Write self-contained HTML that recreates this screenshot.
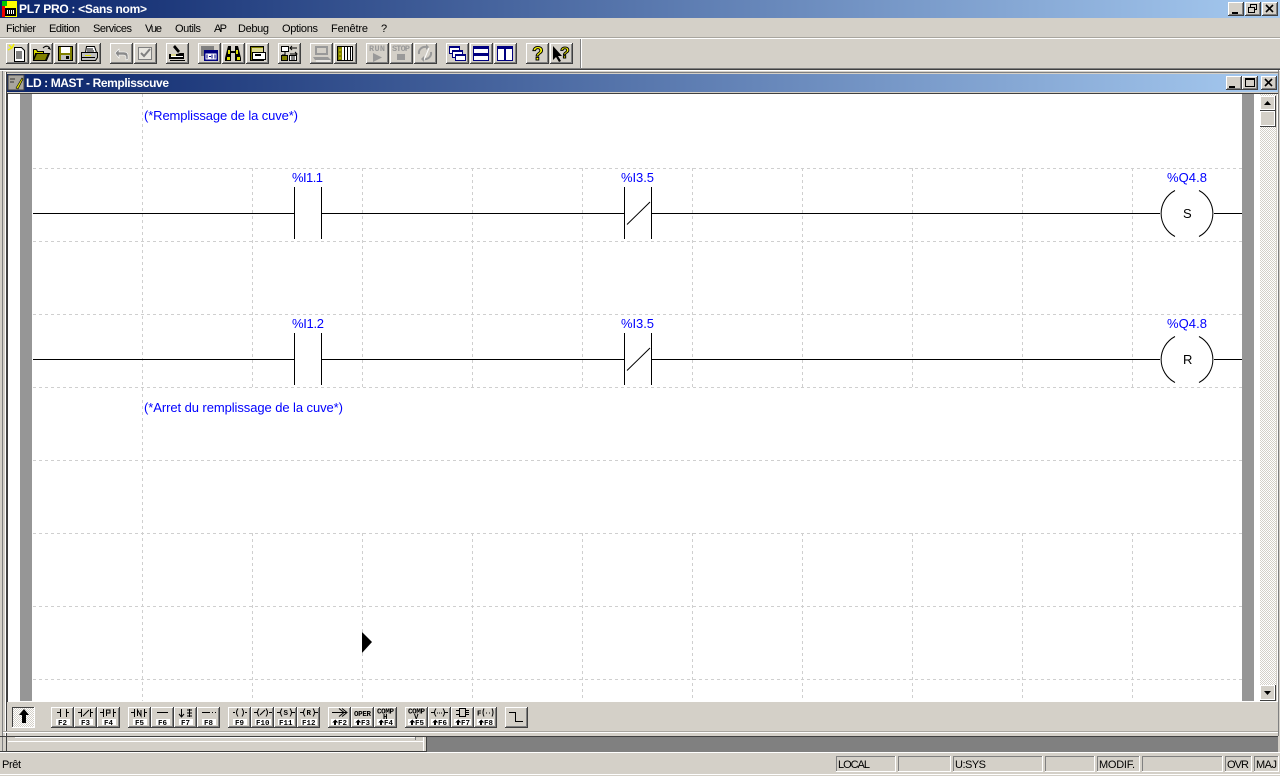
<!DOCTYPE html>
<html><head><meta charset="utf-8"><title>PL7 PRO</title>
<style>html,body{margin:0;padding:0;background:#d4d0c8;overflow:hidden}svg{display:block}
text{font-family:"Liberation Sans",sans-serif}
.m{font-size:11px;fill:#000}.t{font-size:12px;font-weight:bold;fill:#fff}.l{font-size:13px;fill:#00f}
.k{font-family:"Liberation Mono",monospace;font-size:7.5px;font-weight:bold;fill:#000}
.d{font-family:"Liberation Mono",monospace;font-size:8.5px;font-weight:bold;fill:#999}
.s{font-size:11px;fill:#000}</style></head><body>
<svg xmlns="http://www.w3.org/2000/svg" width="1280" height="776" viewBox="0 0 1280 776">
<defs>
<linearGradient id="g"><stop offset="0" stop-color="#0a246a"/><stop offset="1" stop-color="#a6caf0"/></linearGradient>
<pattern id="c" width="2" height="2" patternUnits="userSpaceOnUse"><rect width="2" height="2" fill="#fff"/><rect width="1" height="1" fill="#d4d0c8"/><rect x="1" y="1" width="1" height="1" fill="#d4d0c8"/></pattern>
<g id="b" shape-rendering="crispEdges" stroke="none"><rect width="23" height="21" fill="#404040"/><rect width="22" height="20" fill="#fff"/><rect x="1" y="1" width="21" height="19" fill="#808080"/><rect x="1" y="1" width="20" height="18" fill="#d4d0c8"/></g>
<g id="w" shape-rendering="crispEdges"><rect width="16" height="14" fill="#404040"/><rect width="15" height="13" fill="#fff"/><rect x="1" y="1" width="14" height="12" fill="#808080"/><rect x="1" y="1" width="13" height="11" fill="#d4d0c8"/></g>
<g id="x" fill="none" stroke="#000" stroke-width="1.6"><path d="M4 3l7 7M11 3l-7 7"/></g>
<path id="u" d="M7 12.500l3 3H8v2.500H6v-2.500H4z" fill="#000" stroke="none" shape-rendering="crispEdges"/>
</defs>
<rect width="1280" height="776" fill="#d4d0c8"/>
<!-- title -->
<rect width="1280" height="18" fill="url(#g)"/>
<g shape-rendering="crispEdges"><rect x="2" y="1" width="15" height="16" fill="#ff0"/><rect x="2" y="1" width="5" height="5" fill="#0c0"/><rect x="2" y="6" width="3" height="11" fill="#e00"/><rect x="5" y="8" width="11" height="8" fill="#000"/><rect x="7" y="10" width="1" height="4" fill="#fff"/><rect x="9" y="10" width="1" height="4" fill="#fff"/><rect x="11" y="10" width="1" height="4" fill="#fff"/><rect x="13" y="10" width="1" height="4" fill="#fff"/></g>
<text x="19" y="13" class="t" textLength="128" lengthAdjust="spacing">PL7 PRO : &lt;Sans nom&gt;</text>
<use href="#w" x="1228" y="2"/><rect x="1232" y="12" width="6" height="2" fill="#000"/>
<use href="#w" x="1245" y="2"/><path d="M1250.500 7.500v-3h6v5h-2M1248.500 7.500h6v5h-6z" fill="none" stroke="#000" shape-rendering="crispEdges"/><rect x="1248" y="7" width="7" height="1" fill="#000"/>
<use href="#w" x="1262" y="2"/><use href="#x" x="1262" y="2"/>
<!-- menu -->
<g class="m">
<text class="m" x="6" y="32" textLength="30">Fichier</text><text class="m" x="49" y="32" textLength="31">Edition</text><text class="m" x="93" y="32" textLength="39">Services</text><text class="m" x="145" y="32" textLength="17">Vue</text><text class="m" x="175" y="32" textLength="26">Outils</text><text class="m" x="214" y="32" textLength="13">AP</text><text class="m" x="238" y="32" textLength="31">Debug</text><text class="m" x="282" y="32" textLength="36">Options</text><text class="m" x="331" y="32" textLength="37">Fenêtre</text><text class="m" x="381" y="32">?</text>
</g>
<g shape-rendering="crispEdges"><rect y="38" width="1280" height="1" fill="#fff"/><rect y="37" width="1280" height="1" fill="#a8a59e"/><rect y="68" width="1280" height="1" fill="#808080"/><rect y="69" width="1280" height="1" fill="#404040"/><rect y="70" width="1280" height="1" fill="#fff"/>
<rect x="580" y="39" width="1" height="29" fill="#808080"/><rect x="581" y="39" width="1" height="29" fill="#fff"/></g>
<!-- top toolbar -->
<g transform="translate(6,43)"><use href="#b"/><path d="M8.500 4.500h7l3 3v11h-10z" fill="#fff" stroke="#000"/><path d="M10 9h6M10 11h6M10 13h6M10 15h6" stroke="#000"/><path d="M3 2l3 3M8 1L6 5M2 7l4-2" stroke="#ee0" stroke-width="1.500"/></g>
<g transform="translate(30,43)"><use href="#b"/><path d="M3.500 17.500v-11h3l1 2h6v2h-8l-2 7h13l3-7h-8" fill="#dcdc00" stroke="#000"/><path d="M3.500 17.500l3-7h12l-3 7z" fill="#808000" stroke="#000"/><path d="M13 5q3-3 6-1l1 2-2-1" fill="none" stroke="#000"/></g>
<g transform="translate(54,43)"><use href="#b"/><path d="M4.500 3.500h14v14h-14z" fill="#808000" stroke="#000"/><rect x="7" y="4" width="9" height="6" fill="#fff"/><rect x="7" y="12" width="9" height="5" fill="#c0c0c0"/><rect x="12" y="13" width="3" height="3" fill="#000"/></g>
<g transform="translate(78,43)"><use href="#b"/><path d="M8.500 3.500h8l2 6h-11z" fill="#fff" stroke="#000"/><path d="M3.500 9.500h16v5l-2 3h-14z" fill="#c0c0c0" stroke="#000"/><path d="M9 6h6M9 8h7" stroke="#000"/><rect x="7" y="12" width="6" height="1" fill="#dd0"/><path d="M4 14.500h13" stroke="#000"/></g>
<g transform="translate(110,43)"><use href="#b"/><path d="M5 10l4-4v3h5q4 0 4 4v3l-2 1v-3q0-2-3-2H9v3z" fill="#8a8a8a" stroke="#fff" stroke-width=".6"/></g>
<g transform="translate(134,43)"><use href="#b"/><rect x="4.500" y="4.500" width="13" height="12" fill="#e8e6e0" stroke="#808080"/><path d="M7 10l3 3 6-7" fill="none" stroke="#808080" stroke-width="2"/></g>
<g transform="translate(166,43)"><use href="#b"/><path d="M9 2l5 6-2 2-5-6zM3 11h8l3-1h4v6H3z" fill="#000"/><rect x="5" y="13" width="12" height="1" fill="#fff"/><rect x="4" y="17" width="15" height="1" fill="#000"/><rect x="5" y="11" width="5" height="2" fill="#dcd890"/></g>
<g transform="translate(198,43)"><use href="#b"/><rect x="3" y="3" width="13" height="10" fill="#808080"/><rect x="6" y="7" width="14" height="11" fill="#000080"/><rect x="7.500" y="10.500" width="11" height="6" fill="#fff"/><path d="M9 11.500v4M11 13.500h2M14 11.500v4M17 11.500v4" stroke="#000080"/></g>
<g transform="translate(222,43)"><use href="#b"/><path d="M6 3h3v5h4V3h3l3 12v3h-6V10H9v8H3v-3z" fill="#000"/><rect x="5" y="14" width="3" height="3" fill="#dd0"/><rect x="15" y="14" width="3" height="3" fill="#dd0"/><rect x="6" y="7" width="2" height="4" fill="#dd0"/><rect x="14" y="7" width="2" height="4" fill="#dd0"/></g>
<g transform="translate(246,43)"><use href="#b"/><path d="M4.500 3.500h13v14h-13z" fill="#808000" stroke="#000"/><rect x="6" y="5" width="11" height="4" fill="#dcd890"/><rect x="6.500" y="9.500" width="13" height="7" fill="#fff" stroke="#000"/><rect x="9" y="11" width="6" height="2" fill="#000"/></g>
<g transform="translate(278,43)"><use href="#b"/><rect x="3.500" y="3.500" width="7" height="5" fill="#fff" stroke="#000"/><path d="M7 9v3H4M12 5h7M14 3l-2 2 2 2M12 11h7M17 9l2 2-2 2" fill="none" stroke="#000"/><rect x="3.500" y="12.500" width="6" height="5" fill="#808000" stroke="#000"/><rect x="11.500" y="12.500" width="7" height="5" fill="#fff" stroke="#000"/><path d="M14 13v4M16 13v4" stroke="#000"/></g>
<g transform="translate(310,43)"><use href="#b"/><rect x="5" y="3" width="13" height="9" fill="#999"/><rect x="7" y="5" width="9" height="5" fill="#d4d0c8"/><path d="M3 14h15l3 3H5z" fill="#999"/><path d="M6 18h14" stroke="#fff"/></g>
<g transform="translate(334,43)"><use href="#b"/><rect x="3.500" y="3.500" width="15" height="14" fill="#fff" stroke="#000"/><rect x="4" y="4" width="4" height="13" fill="#808000"/><path d="M10.500 4v14M13.500 4v14M16.500 4v14" stroke="#000"/><path d="M5 7h2M5 11h2M5 15h2" stroke="#dd0"/></g>
<g transform="translate(366,43)"><use href="#b"/><text class="d" x="3" y="8" textLength="16">RUN</text><path d="M7 10l9 4.500-9 4.500z" fill="#999"/></g>
<g transform="translate(390,43)"><use href="#b"/><text class="d" x="2" y="8" textLength="18">STOP</text><rect x="7" y="11" width="8" height="6" fill="#999"/></g>
<g transform="translate(414,43)"><use href="#b"/><path d="M5 11a6 6 0 0 1 7-7M17 9a6 6 0 0 1-7 7" fill="none" stroke="#999" stroke-width="2"/><path d="M10 17l5-12" stroke="#fff"/><path d="M12 1l3 3-3 3zM10 13l-3 3 3 3z" fill="#999"/></g>
<g transform="translate(446,43)" shape-rendering="crispEdges"><use href="#b"/><g fill="#fff" stroke="#000080"><rect x="3.500" y="3.500" width="10" height="7"/><rect x="6.500" y="7.500" width="10" height="7"/><rect x="9.500" y="11.500" width="10" height="6"/></g><rect x="3" y="3" width="11" height="2" fill="#000080"/><rect x="6" y="7" width="11" height="2" fill="#000080"/><rect x="9" y="11" width="11" height="2" fill="#000080"/></g>
<g transform="translate(470,43)" shape-rendering="crispEdges"><use href="#b"/><rect x="3.500" y="3.500" width="15" height="14" fill="#fff" stroke="#000080"/><rect x="3" y="3" width="16" height="3" fill="#000080"/><rect x="3" y="10" width="16" height="3" fill="#000080"/></g>
<g transform="translate(494,43)" shape-rendering="crispEdges"><use href="#b"/><rect x="3.500" y="3.500" width="15" height="14" fill="#fff" stroke="#000080"/><rect x="3" y="3" width="16" height="3" fill="#000080"/><rect x="10" y="3" width="2" height="15" fill="#000080"/></g>
<g transform="translate(526,43)"><use href="#b"/><text x="6" y="17" style="font-size:19px;font-weight:bold;fill:#ff0;stroke:#000;stroke-width:1">?</text></g>
<g transform="translate(550,43)"><use href="#b"/><path d="M3 3v14l3-3 3 5 2-1-3-5h4z" fill="#000"/><text x="10" y="15" style="font-size:16px;font-weight:bold;fill:#ff0;stroke:#000;stroke-width:1">?</text></g>
<!-- doc window -->
<g shape-rendering="crispEdges">
<rect x="2" y="71" width="1276" height="1" fill="#d4d0c8"/>
<rect x="5" y="72" width="1274" height="1" fill="#808080"/><rect x="5" y="72" width="1" height="664" fill="#fff"/><rect x="6" y="72" width="1" height="664" fill="#404040"/><rect x="2" y="71" width="1" height="680" fill="#808080"/><rect x="1278" y="70" width="1" height="666" fill="#808080"/>
<rect x="7" y="74" width="1271" height="18" fill="url(#g)"/>
<rect x="7" y="92" width="1271" height="1" fill="#d4d0c8"/><rect x="7" y="93" width="1271" height="1" fill="#404040"/><rect x="7" y="93" width="1" height="609" fill="#404040"/>
<rect x="8" y="94" width="1270" height="607" fill="#fff"/>
<rect x="20" y="94" width="12" height="607" fill="#969696"/><rect x="1242" y="94" width="12" height="607" fill="#969696"/>
<rect x="1260" y="94" width="16" height="607" fill="url(#c)"/>
<rect x="1276" y="94" width="1" height="607" fill="#d4d0c8"/>
<rect x="8" y="701" width="1270" height="1" fill="#fff"/>
</g>
<rect x="8" y="75" width="16" height="15" fill="#a8a59e" stroke="#404040" shape-rendering="crispEdges"/><path d="M16 88l6-10 1 1-5 10z" fill="#dd0" stroke="#000" stroke-width=".6"/><path d="M10 79h5M10 82h4" stroke="#333"/>
<text x="26" y="87" class="t" textLength="143" lengthAdjust="spacing">LD : MAST - Remplisscuve</text>
<use href="#w" x="1226" y="76"/><rect x="1229" y="86" width="6" height="2" fill="#000"/>
<use href="#w" x="1242" y="76"/><rect x="1245.500" y="78.500" width="9" height="8" fill="none" stroke="#000" shape-rendering="crispEdges"/><rect x="1245" y="78" width="10" height="2" fill="#000"/>
<use href="#w" x="1261" y="76"/><use href="#x" x="1261" y="76"/>
<g shape-rendering="crispEdges"><rect x="1260" y="96" width="16" height="15" fill="#404040"/><rect x="1260" y="96" width="15" height="14" fill="#fff"/><rect x="1261" y="97" width="13" height="12" fill="#d4d0c8"/>
<rect x="1260" y="111" width="16" height="16" fill="#404040"/><rect x="1260" y="111" width="15" height="15" fill="#fff"/><rect x="1261" y="112" width="13" height="13" fill="#d4d0c8"/>
<rect x="1260" y="685" width="16" height="16" fill="#404040"/><rect x="1260" y="685" width="15" height="15" fill="#fff"/><rect x="1261" y="686" width="13" height="13" fill="#d4d0c8"/></g>
<path d="M1264 105h7l-3.500-4z" fill="#000"/><path d="M1264 691h7l-3.500 4z" fill="#000"/>
<!-- grid -->
<g stroke="#cfcfcf" stroke-dasharray="3 3" fill="none" shape-rendering="crispEdges">
<path d="M33 168.500H1242M33 241.500H1242M33 314.500H1242M33 387.500H1242M33 460.500H1242M33 533.500H1242M33 606.500H1242M33 679.500H1242"/>
<path d="M142.500 94V701"/>
<path d="M252.500 168V387M362.500 168V387M472.500 168V387M582.500 168V387M692.500 168V387M802.500 168V387M912.500 168V387M1022.500 168V387M1132.500 168V387"/>
<path d="M252.500 533V701M362.500 533V701M472.500 533V701M582.500 533V701M692.500 533V701M802.500 533V701M912.500 533V701M1022.500 533V701M1132.500 533V701"/>
</g>
<!-- rungs -->
<g stroke="#000" fill="none" shape-rendering="crispEdges">
<path d="M33 213.500H294M321 213.500H624M651 213.500H1160M1214 213.500H1242"/>
<path d="M294.500 187V239M321.500 187V239M624.500 187V239M651.500 187V239"/>
<path d="M33 359.500H294M321 359.500H624M651 359.500H1160M1214 359.500H1242"/>
<path d="M294.500 333V385M321.500 333V385M624.500 333V385M651.500 333V385"/>
</g>
<g stroke="#000" fill="none">
<path d="M627 224.500L650 202M627 370.500L650 348"/>
<path d="M1175 190.500A26 26 0 0 0 1175 236.500M1199 190.500A26 26 0 0 1 1199 236.500"/>
<path d="M1175 336.500A26 26 0 0 0 1175 382.500M1199 336.500A26 26 0 0 1 1199 382.500"/>
</g>
<text class="l" x="144" y="120" textLength="154">(*Remplissage de la cuve*)</text>
<text class="l" x="144" y="412" textLength="199">(*Arret du remplissage de la cuve*)</text>
<text class="l" x="292" y="182" textLength="31">%I1.1</text><text class="l" x="621" y="182" textLength="33">%I3.5</text><text class="l" x="1167" y="182" textLength="40">%Q4.8</text>
<text class="l" x="292" y="328" textLength="32">%I1.2</text><text class="l" x="621" y="328" textLength="33">%I3.5</text><text class="l" x="1167" y="328" textLength="40">%Q4.8</text>
<text x="1183" y="218" style="font-size:13px;fill:#000">S</text><text x="1183" y="364" style="font-size:13px;fill:#000">R</text>
<path d="M362 632l10 10-10 11z" fill="#000"/>
<!-- bottom toolbar -->
<g shape-rendering="crispEdges"><rect x="12" y="707" width="23" height="21" fill="#fff"/><rect x="12" y="707" width="22" height="20" fill="#404040"/><rect x="13" y="708" width="21" height="19" fill="url(#c)"/></g>
<path d="M24 709l5 6h-3v8h-4v-8h-3z" fill="#000"/>
<g fill="none" stroke="#000">
<g transform="translate(51,707)"><use href="#b"/><path d="M6 5.500h3M9.500 2v8M15.500 2v8M15 5.500h3"/><rect x="5" y="12" width="14" height="6" fill="#fff" stroke="none"/><text class="k" x="7" y="18" stroke="none">F2</text></g>
<g transform="translate(74,707)"><use href="#b"/><path d="M4 5.500h3M7.500 2v8M16.500 2v8M16 5.500h3M9 9l6-6"/><rect x="5" y="12" width="14" height="6" fill="#fff" stroke="none"/><text class="k" x="7" y="18" stroke="none">F3</text></g>
<g transform="translate(97,707)"><use href="#b"/><path d="M3 5.500h3M6.500 2v8M16.500 2v8M16 5.500h3M9.500 9V3h3.500v3h-3.500"/><rect x="5" y="12" width="14" height="6" fill="#fff" stroke="none"/><text class="k" x="7" y="18" stroke="none">F4</text></g>
<g transform="translate(128,707)"><use href="#b"/><path d="M3 5.500h3M6.500 2v8M16.500 2v8M16 5.500h3M9.500 9V3l3.500 6V3"/><rect x="5" y="12" width="14" height="6" fill="#fff" stroke="none"/><text class="k" x="7" y="18" stroke="none">F5</text></g>
<g transform="translate(151,707)"><use href="#b"/><path d="M6 5.500h11"/><rect x="5" y="12" width="14" height="6" fill="#fff" stroke="none"/><text class="k" x="7" y="18" stroke="none">F6</text></g>
<g transform="translate(174,707)"><use href="#b"/><path d="M7.500 2v7M5 7l2.500 3L10 7M15.500 2v8M13 3h5M13 9h5M13 6h5"/><rect x="5" y="12" width="14" height="6" fill="#fff" stroke="none"/><text class="k" x="7" y="18" stroke="none">F7</text></g>
<g transform="translate(197,707)"><use href="#b"/><path d="M5 5.500h8M15 5.500h1M18 5.500h1"/><rect x="5" y="12" width="14" height="6" fill="#fff" stroke="none"/><text class="k" x="7" y="18" stroke="none">F8</text></g>
<g transform="translate(228,707)"><use href="#b"/><path d="M5 5.500h2M10 1.500q-3 4 0 8M14 1.500q3 4 0 8M17 5.500h2"/><rect x="5" y="12" width="14" height="6" fill="#fff" stroke="none"/><text class="k" x="7" y="18" stroke="none">F9</text></g>
<g transform="translate(251,707)"><use href="#b"/><path d="M3 5.500h3M8 1.500q-3 4 0 8M15 1.500q3 4 0 8M18 5.500h3M9 8l5-5"/><rect x="4" y="12" width="16" height="6" fill="#fff" stroke="none"/><text class="k" x="5" y="18" stroke="none">F10</text></g>
<g transform="translate(274,707)"><use href="#b"/><path d="M3 5.500h3M8 1.500q-3 4 0 8M16 1.500q3 4 0 8M18 5.500h3"/><text class="k" x="9.500" y="8" stroke="none">S</text><rect x="4" y="12" width="16" height="6" fill="#fff" stroke="none"/><text class="k" x="5" y="18" stroke="none">F11</text></g>
<g transform="translate(297,707)"><use href="#b"/><path d="M3 5.500h3M8 1.500q-3 4 0 8M16 1.500q3 4 0 8M18 5.500h3"/><text class="k" x="9.500" y="8" stroke="none">R</text><rect x="4" y="12" width="16" height="6" fill="#fff" stroke="none"/><text class="k" x="5" y="18" stroke="none">F12</text></g>
<g transform="translate(328,707)"><use href="#b"/><path d="M4 5.500h14M11 1.500l5 4-5 4M14 1.500l5 4-5 4"/><rect x="3" y="12" width="17" height="6" fill="#fff" stroke="none"/><use href="#u"/><text class="k" x="10" y="18" stroke="none">F2</text></g>
<g transform="translate(351,707)"><use href="#b"/><text class="k" x="3" y="9" stroke="none" textLength="17">OPER</text><rect x="3" y="12" width="17" height="6" fill="#fff" stroke="none"/><use href="#u"/><text class="k" x="10" y="18" stroke="none">F3</text></g>
<g transform="translate(374,707)"><use href="#b"/><text class="k" x="3" y="6.500" stroke="none" textLength="17">COMP</text><text class="k" x="9" y="12" stroke="none">H</text><rect x="3" y="12" width="17" height="6" fill="#fff" stroke="none"/><use href="#u"/><text class="k" x="10" y="18" stroke="none">F4</text></g>
<g transform="translate(405,707)"><use href="#b"/><text class="k" x="3" y="6.500" stroke="none" textLength="17">COMP</text><text class="k" x="9" y="12" stroke="none">V</text><rect x="3" y="12" width="17" height="6" fill="#fff" stroke="none"/><use href="#u"/><text class="k" x="10" y="18" stroke="none">F5</text></g>
<g transform="translate(428,707)"><use href="#b"/><path d="M3 5.500h3M8 1.500q-3 4 0 8M15 1.500q3 4 0 8M17 5.500h3M9 6h1M11 6h1M13 6h1"/><rect x="3" y="12" width="17" height="6" fill="#fff" stroke="none"/><use href="#u"/><text class="k" x="10" y="18" stroke="none">F6</text></g>
<g transform="translate(451,707)"><use href="#b"/><rect x="8.500" y="1.500" width="6" height="8"/><path d="M5 3.500h3M5 7.500h3M15 3.500h3M15 5.500h3M15 7.500h3"/><rect x="3" y="12" width="17" height="6" fill="#fff" stroke="none"/><use href="#u"/><text class="k" x="10" y="18" stroke="none">F7</text></g>
<g transform="translate(474,707)"><use href="#b"/><text class="k" x="3" y="8.500" stroke="none">F</text><path d="M10 1.500q-2 4 0 8M18 1.500q2 4 0 8M12 6h1M15 6h1"/><rect x="3" y="12" width="17" height="6" fill="#fff" stroke="none"/><use href="#u"/><text class="k" x="10" y="18" stroke="none">F8</text></g>
<g transform="translate(505,707)"><use href="#b"/><path d="M4 5.500h6.500v9H18" shape-rendering="crispEdges"/></g>
</g>
<!-- bottom bars -->
<g shape-rendering="crispEdges">
<rect x="3" y="731" width="1275" height="1" fill="#a8a59e"/><rect x="3" y="732" width="1275" height="1" fill="#fff"/>
<rect x="0" y="736" width="1278" height="1" fill="#404040"/>
<rect x="427" y="737" width="851" height="15" fill="#808080"/>
<rect x="2" y="737" width="1" height="15" fill="#808080"/>
<rect x="6" y="737" width="1" height="15" fill="#404040"/>
<rect x="15" y="737" width="400" height="1" fill="#fff"/>
<rect x="415" y="737" width="1" height="3" fill="#808080"/>
<rect x="8" y="741" width="415" height="1" fill="#fff"/>
<rect x="423" y="737" width="1" height="15" fill="#fff"/>
<rect x="426" y="737" width="1" height="15" fill="#404040"/>
<rect x="0" y="751" width="427" height="1" fill="#404040"/>
<rect x="0" y="752" width="1280" height="1" fill="#fff"/>
</g>
<!-- status -->
<text class="s" x="2" y="768" textLength="19">Prêt</text>
<g fill="none" shape-rendering="crispEdges" stroke="#808080">
<path d="M836.500 771V756.500H895M898.500 771V756.500H950M953.500 771V756.500H1042M1045.500 771V756.500H1094M1097.500 771V756.500H1139M1142.500 771V756.500H1222M1225.500 771V756.500H1251M1254.500 771V756.500H1278"/>
</g>
<g fill="none" shape-rendering="crispEdges" stroke="#fff">
<path d="M836 771.500H895.500V756M898 771.500H950.500V756M953 771.500H1042.500V756M1045 771.500H1094.500V756M1097 771.500H1139.500V756M1142 771.500H1222.500V756M1225 771.500H1251.500V756M1254 771.500H1278.500V756"/>
</g>
<text class="s" x="838" y="768" textLength="32">LOCAL</text><text class="s" x="955" y="768" textLength="31">U:SYS</text><text class="s" x="1099" y="768" textLength="36">MODIF.</text><text class="s" x="1227" y="768" textLength="22">OVR</text><text class="s" x="1256" y="768" textLength="21">MAJ</text>
<rect x="0" y="774" width="1280" height="1" fill="#fff" shape-rendering="crispEdges"/>
</svg>
</body></html>
